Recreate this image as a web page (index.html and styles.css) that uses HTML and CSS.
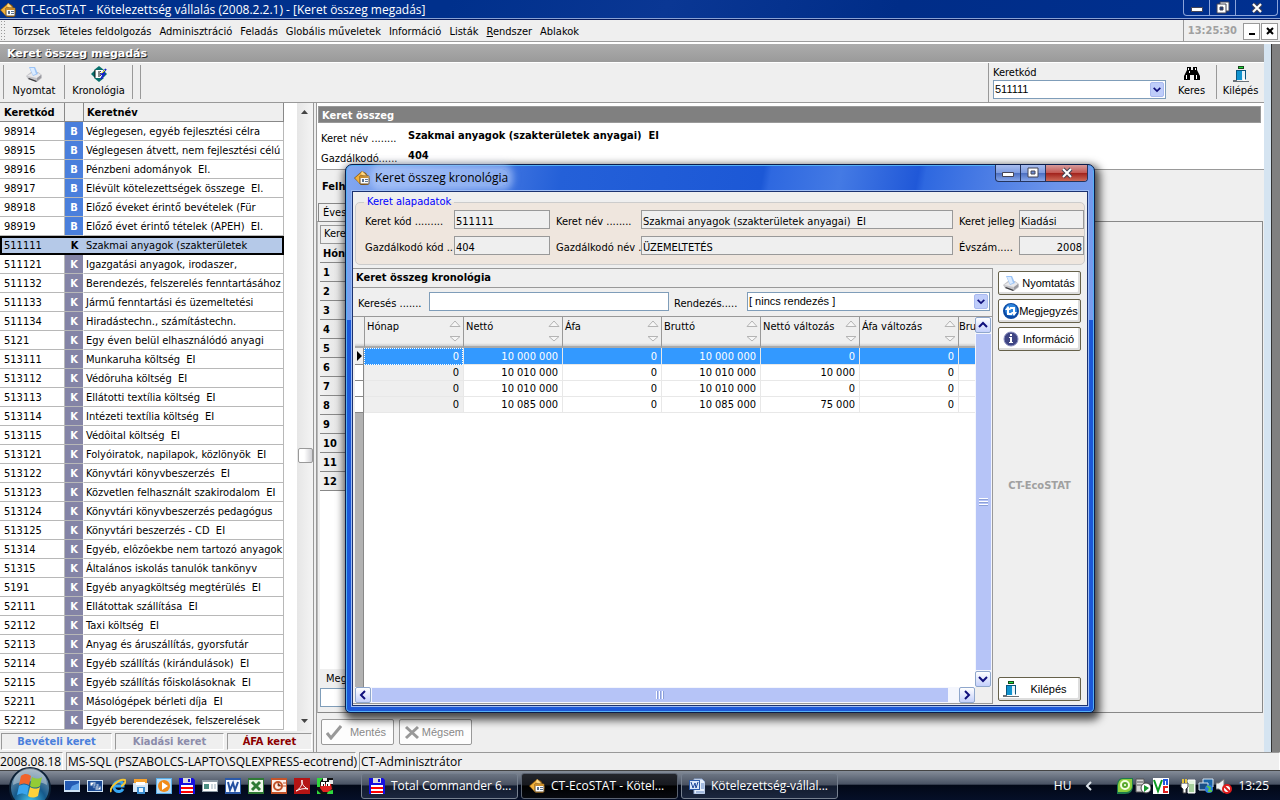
FILE: index.html
```html
<!DOCTYPE html>
<html lang="hu">
<head>
<meta charset="utf-8">
<title>CT-EcoSTAT</title>
<link rel="stylesheet" href="styles.css">
</head>
<body>
<svg class="defs" aria-hidden="true">
  <symbol id="house" viewBox="0 0 16 16"><path d="M0 8 8 1l4 2 4 6-2 6H7z" fill="#8a5a10"/><path d="M1 8 8 2l3 2v9l-5 1z" fill="#f1b13c"/><path d="M8 1l7 7-1 1-7-5z" fill="#ffd884"/><path d="M6 6h9v8H6z" fill="#fff" stroke="#6b4a1c"/><path d="M6 6h9v2H6z" fill="#c98c2a"/><path d="M8 9h2v3H8zM11 9h3v1h-3zM11 11h3v1h-3z" fill="#5a7290"/></symbol>
  <symbol id="printer" viewBox="0 0 16 16"><path d="M0 10l5-4h7l4 3v3l-5 4-9-3z" fill="#c4c4c8"/><path d="M1 10l5-3h6l3 2-4 3z" fill="#e9e9ec"/><path d="M3 1h6l3 7-5 2z" fill="#9cc4f6"/><path d="M4 2h4l2 6-3 1z" fill="#dcecff"/><path d="M2 13l8 3 1-1-8-3z" fill="#3c3c40"/><path d="M11 12l4-3v3l-4 3z" fill="#9a9aa0"/></symbol>
  <symbol id="chrono" viewBox="0 0 16 16"><path d="M8 0l5 4H3zM8 16l-5-4h10z" fill="#08706c"/><path d="M4 4v8L0 8z" fill="#08706c"/><path d="M12 4v8l4-4z" fill="#08706c"/><path d="M4 4h8v8H4z" fill="#fff"/><path d="M4 4v8M8 5v6" stroke="#111"/><path d="M9 5h1v1H9zM9 7h1v1H9zM9 9h1v1H9z" fill="#444"/><path d="M15 3l-4 5h2l-3 5" fill="none" stroke="#1822c8" stroke-width="2"/><path d="M14 4l-3 3" stroke="#ff0"/></symbol>
  <symbol id="bino" viewBox="0 0 16 16"><path d="M3 1h4v3h2V1h4v3l3 6v4h-6V9H6v5H0v-4l3-6z" fill="#000"/><path d="M4 2h1v2H4zM11 2h1v2h-1zM2 9h1v4H2zM12 9h1v4h-1zM5 5h1v2H5z" fill="#fff"/></symbol>
  <symbol id="door" viewBox="0 0 16 16"><path d="M5 0h6v3H5z" fill="#174a1c"/><path d="M6 1h4v1H6z" fill="#1fe03c"/><path d="M3 4h10v10H3z" fill="#0a557e"/><path d="M4 5h5v9H4z" fill="#1093cf"/><path d="M9 5h3v8l-3 2z" fill="#e6f4fc"/><path d="M0 14h4v1h12v1H0z" fill="#687078"/><path d="M10 11l4 4h-4z" fill="#fff"/></symbol>
  <symbol id="down" viewBox="0 0 12 12"><path d="M2 4l4 4 4-4" fill="none" stroke="#10107c" stroke-width="2"/></symbol>
  <symbol id="sort" viewBox="0 0 12 22"><path d="M1 6.500h10L6 1z" fill="#f6f6f6" stroke="#b4b4b4"/><path d="M1 16.500h10L6 21z" fill="#f6f6f6" stroke="#b4b4b4"/></symbol>
  <symbol id="floppy" viewBox="0 0 16 16"><path d="M0 0h14l2 2v14H0z" fill="#1410e0"/><path d="M4 0h8v5H4z" fill="#dcdcdc"/><path d="M9 1h2v3H9z" fill="#1410e0"/><path d="M2 7h12v9H2z" fill="#fff"/><path d="M2 9h12v2H2zM2 13h12v2H2z" fill="#f00"/></symbol>
  <symbol id="word" viewBox="0 0 16 16"><path d="M0 0h16v16H0z" fill="#2b59a8"/><path d="M1 2h14v12H1z" fill="#f4f8ff"/><path d="M3 4l2 8 3-7 2 7 3-8" fill="none" stroke="#2450a0" stroke-width="2"/></symbol>
  <symbol id="worddoc" viewBox="0 0 16 16"><path d="M5 1h8l3 3v12H5z" fill="#e8f0fc" stroke="#8fa9d4"/><path d="M12 6h3M12 8h3M12 10h3M7 14h8" stroke="#5f83c0"/><path d="M0 2h11v10H0z" fill="#2b59a8"/><path d="M1 3h9v8H1z" fill="#dbe7fa"/><path d="M2 4l2 6 2-5 1 5 2-6" fill="none" stroke="#1d479a" stroke-width="1"/></symbol>
</svg>

<header class="titlebar">
  <svg class="i16"><use href="#house"/></svg>
  <h1>CT-EcoSTAT - Kötelezettség vállalás (2008.2.2.1) - [Keret összeg megadás]</h1>
  <div class="winbtns">
    <button aria-label="Kis méret"><svg viewBox="0 0 14 14"><path d="M1.500 6.500h11v4h-11z" fill="#fff" stroke="#445"/></svg></button>
    <button aria-label="Előző méret"><svg viewBox="0 0 14 14"><path d="M4 1h9v9H4z" fill="#fff" stroke="#445"/><path d="M1 3h9v9H1z" fill="#fff" stroke="#445"/><path d="M4 6h3v3H4z" fill="#1c3a82" stroke="#445"/></svg></button>
    <button class="wide" aria-label="Bezárás"><svg viewBox="0 0 14 14"><path d="M3 3l8 8M11 3l-8 8" stroke="#445" stroke-width="4"/><path d="M3 3l8 8M11 3l-8 8" stroke="#fff" stroke-width="2"/></svg></button>
  </div>
</header>

<nav class="menubar">
  <span class="grip"></span>
  <button>Törzsek</button><button>Tételes feldolgozás</button><button>Adminisztráció</button><button>Feladás</button><button>Globális műveletek</button><button>Információ</button><button>Listák</button><button><u>R</u>endszer</button><button>Ablakok</button>
  <time class="clock">13:25:30</time>
  <div class="mdibtns">
    <button aria-label="Kicsinyítés"><svg viewBox="0 0 10 10"><path d="M2 8h6" stroke="#000" stroke-width="2"/></svg></button>
    <button aria-label="Ablak bezárása"><svg viewBox="0 0 10 10"><path d="M2 2l6 6M8 2l-6 6" stroke="#000" stroke-width="2"/></svg></button>
  </div>
</nav>

<main class="mdi">
  <section class="form">
    <h2 class="banner">Keret összeg megadás</h2>
    <div class="toolbar">
      <button class="tool tool-print"><svg class="i16"><use href="#printer"/></svg>Nyomtat</button>
      <button class="tool tool-chrono"><svg class="i16"><use href="#chrono"/></svg>Kronológia</button>
      <span class="tool-end"></span>
      <div class="codebox">
        <label for="code">Keretkód</label>
        <span class="combo"><select id="code"><option>511111</option></select><svg><use href="#down"/></svg></span>
      </div>
      <button class="tool tool-find"><svg class="i16"><use href="#bino"/></svg>Keres</button>
      <button class="tool tool-exit"><svg class="i16"><use href="#door"/></svg>Kilépés</button>
    </div>

    <div class="split">
      <div class="left">
        <div class="listwrap">
          <table class="list">
            <colgroup><col class="c-code"><col class="c-type"><col></colgroup>
            <thead><tr><th>Keretkód</th><th></th><th>Keretnév</th></tr></thead>
            <tbody>
              <tr class="b"><td>98914</td><td>B</td><td>Véglegesen, egyéb fejlesztési célra</td></tr>
              <tr class="b"><td>98915</td><td>B</td><td>Véglegesen átvett, nem fejlesztési célú</td></tr>
              <tr class="b"><td>98916</td><td>B</td><td>Pénzbeni adományok&nbsp; EI.</td></tr>
              <tr class="b"><td>98917</td><td>B</td><td>Elévült kötelezettségek összege&nbsp; EI.</td></tr>
              <tr class="b"><td>98918</td><td>B</td><td>Előző éveket érintő bevételek (Für</td></tr>
              <tr class="b"><td>98919</td><td>B</td><td>Előző évet érintő tételek (APEH)&nbsp; EI.</td></tr>
              <tr class="sel"><td>511111</td><td>K</td><td>Szakmai anyagok (szakterületek</td></tr>
              <tr><td>511121</td><td>K</td><td>Igazgatási anyagok, irodaszer,</td></tr>
              <tr><td>511132</td><td>K</td><td>Berendezés, felszerelés fenntartásához</td></tr>
              <tr><td>511133</td><td>K</td><td>Jármű fenntartási és üzemeltetési</td></tr>
              <tr><td>511134</td><td>K</td><td>Hiradástechn., számítástechn.</td></tr>
              <tr><td>5121</td><td>K</td><td>Egy éven belül elhasználódó anyagi</td></tr>
              <tr><td>513111</td><td>K</td><td>Munkaruha költség&nbsp; EI</td></tr>
              <tr><td>513112</td><td>K</td><td>Védôruha költség&nbsp; EI</td></tr>
              <tr><td>513113</td><td>K</td><td>Ellátotti textília költség&nbsp; EI</td></tr>
              <tr><td>513114</td><td>K</td><td>Intézeti textília költség&nbsp; EI</td></tr>
              <tr><td>513115</td><td>K</td><td>Védôital költség&nbsp; EI</td></tr>
              <tr><td>513121</td><td>K</td><td>Folyóiratok, napilapok, közlönyök&nbsp; EI</td></tr>
              <tr><td>513122</td><td>K</td><td>Könyvtári könyvbeszerzés&nbsp; EI</td></tr>
              <tr><td>513123</td><td>K</td><td>Közvetlen felhasznált szakirodalom&nbsp; EI</td></tr>
              <tr><td>513124</td><td>K</td><td>Könyvtári könyvbeszerzés pedagógus</td></tr>
              <tr><td>513125</td><td>K</td><td>Könyvtári beszerzés - CD&nbsp; EI</td></tr>
              <tr><td>51314</td><td>K</td><td>Egyéb, elôzôekbe nem tartozó anyagok</td></tr>
              <tr><td>51315</td><td>K</td><td>Általános iskolás tanulók tankönyv</td></tr>
              <tr><td>5191</td><td>K</td><td>Egyéb anyagköltség megtérülés&nbsp; EI</td></tr>
              <tr><td>52111</td><td>K</td><td>Ellátottak szállítása&nbsp; EI</td></tr>
              <tr><td>52112</td><td>K</td><td>Taxi költség&nbsp; EI</td></tr>
              <tr><td>52113</td><td>K</td><td>Anyag és áruszállítás, gyorsfutár</td></tr>
              <tr><td>52114</td><td>K</td><td>Egyéb szállítás (kirándulások)&nbsp; EI</td></tr>
              <tr><td>52115</td><td>K</td><td>Egyéb szállítás főiskolásoknak&nbsp; EI</td></tr>
              <tr><td>52211</td><td>K</td><td>Másológépek bérleti díja&nbsp; EI</td></tr>
              <tr><td>52212</td><td>K</td><td>Egyéb berendezések, felszerelések</td></tr>
            </tbody>
          </table>
          <div class="vista-scroll">
            <svg viewBox="0 0 8 5"><path d="M0 4h7L3.500 0z" fill="#444"/></svg>
            <span class="vista-thumb"></span>
            <svg viewBox="0 0 8 5"><path d="M0 0h7L3.500 4z" fill="#444"/></svg>
          </div>
        </div>
        <div class="legend"><span class="l-in">Bevételi keret</span><span class="l-out">Kiadási keret</span><span class="l-vat">ÁFA keret</span></div>
      </div>

      <div class="right">
        <div class="summary">
          <h3>Keret összeg</h3>
          <dl><dt>Keret név ........</dt><dd>Szakmai anyagok (szakterületek anyagai)&nbsp; EI</dd><dt>Gazdálkodó......</dt><dd>404</dd></dl>
        </div>
        <div class="usage">Felh</div>
        <button class="tab">Éves</button>
        <div class="page">
          <div class="sub">Kere</div>
          <table class="months">
            <thead><tr><th>Hón</th></tr></thead>
            <tbody><tr><td>1</td></tr><tr><td>2</td></tr><tr><td>3</td></tr><tr><td>4</td></tr><tr><td>5</td></tr><tr><td>6</td></tr><tr><td>7</td></tr><tr><td>8</td></tr><tr><td>9</td></tr><tr><td>10</td></tr><tr><td>11</td></tr><tr><td>12</td></tr></tbody>
          </table>
          <div class="blank"></div>
          <label class="notelabel" for="note">Meg</label>
          <input class="note" id="note" type="text">
        </div>
        <div class="actions">
          <button disabled><svg class="i16" viewBox="0 0 16 16"><path d="M1 9l4 5L15 2" fill="none" stroke="#999" stroke-width="3"/></svg><span>Mentés</span></button>
          <button disabled><svg class="i16" viewBox="0 0 16 16"><path d="M2 3l12 11M14 3L2 14" stroke="#999" stroke-width="3"/></svg><span>Mégsem</span></button>
        </div>
      </div>
    </div>
  </section>
  <div class="edge"></div>
  <div class="desk"></div>
</main>

<footer class="status"><span class="s-date">2008.08.18</span><span class="s-db">MS-SQL (PSZABOLCS-LAPTO\SQLEXPRESS-ecotrend)</span><span class="s-user">CT-Adminisztrátor</span></footer>

<div class="taskbar">
  <button class="start" aria-label="Start"><svg viewBox="0 0 44 44">
    <defs><radialGradient id="orb" cx="50%" cy="85%" r="80%"><stop offset="0" stop-color="#43c5ee"/><stop offset=".5" stop-color="#155a8c"/><stop offset="1" stop-color="#7c94a8"/></radialGradient></defs>
    <circle cx="22" cy="22" r="20" fill="url(#orb)" stroke="#0c2136" stroke-width="2"/>
    <path d="M5 19a17 17 0 0 1 34 0c-9-5-24-5-34 0z" fill="#fff" opacity=".35"/>
    <path d="M13 10c4-3 7-2 10 0l-2 9c-4-2-7-2-10 0z" fill="#f0642c"/><path d="M24 11c4 2 7 2 10 0l-2 9c-3 2-7 2-10 0z" fill="#93cc35"/><path d="M11 20c4-2 7-2 10 0l-2 9c-4-2-7-2-10 0z" fill="#3aa5ee"/><path d="M22 21c4 2 7 2 10 0l-2 9c-4 2-7 2-10 0z" fill="#ffd23a"/></svg></button>
  <div class="quick">
    <svg viewBox="0 0 16 16"><path d="M0 2h16v12H0z" fill="#cfe2f4"/><path d="M1 3h14v9H1z" fill="#245bb4"/><path d="M8 8l7-3v7H6z" fill="#5fa0e6"/></svg>
    <svg viewBox="0 0 16 16"><path d="M0 2h16v12H0z" fill="#cfe2f4"/><path d="M1 3h14v10H1z" fill="#1c4a94"/><path d="M3 4h6v4H3zM6 6h6v4H6zM8 8h6v4H8z" fill="#fff" stroke="#2a5aa0"/></svg>
    <svg viewBox="0 0 16 16"><path d="M13 11a5 5 0 1 1 0-5v2H4" fill="none" stroke="#36a6f2" stroke-width="3"/><path d="M1 14C-1 10 9 0 15 2c2 2-3 6-4 6" fill="none" stroke="#f5c532" stroke-width="2"/></svg>
    <svg viewBox="0 0 16 16"><path d="M1 1h13v5H1z" fill="#f5a02c"/><path d="M0 5h15v9H0z" fill="#d6e6f5"/><path d="M3 4h9v3H3z" fill="#fff"/><path d="M4 9h8v7H4z" fill="#3d8fd2"/><path d="M6 10h4v4H6z" fill="#e9f6ff"/></svg>
    <svg viewBox="0 0 16 16"><path d="M0 0h16v16H0z" fill="#5aaee8"/><path d="M1 1h14v14H1z" fill="#b7dcf7"/><circle cx="8" cy="8" r="6" fill="#f18b18"/><path d="M6 4l6 4-6 4z" fill="#fff"/></svg>
    <svg><use href="#floppy"/></svg>
    <svg viewBox="0 0 16 16"><path d="M0 2h16v12H0z" fill="#8e9ba6"/><path d="M1 4h14v9H1z" fill="#fff"/><path d="M2 6h5v5H2z" fill="#4a8f83"/><path d="M9 6h2v5H9zM12 6h2v5h-2z" fill="#ccd6dc"/></svg>
    <svg><use href="#word"/></svg>
    <svg viewBox="0 0 16 16"><path d="M0 0h16v16H0z" fill="#2f7a35"/><path d="M1 2h14v12H1z" fill="#eff8ea"/><path d="M4 4l8 8M12 4l-8 8" stroke="#2f7a35" stroke-width="3"/></svg>
    <svg viewBox="0 0 16 16"><path d="M0 0h16v16H0z" fill="#c3532a"/><path d="M1 2h14v12H1z" fill="#fff0e8"/><circle cx="7" cy="8" r="4" fill="none" stroke="#c3532a" stroke-width="2"/><path d="M7 5v3h3M12 5h3M12 8h3" stroke="#c3532a"/></svg>
    <svg viewBox="0 0 16 16"><path d="M0 0h16v16H0z" fill="#b41414"/><path d="M2 13C6 11 9 6 8 2c-1 2 1 7 6 9-4-1-8 0-12 2z" fill="none" stroke="#fff"/></svg>
    <svg viewBox="0 0 16 16"><path d="M0 0h16v16H0z" fill="#111"/><path d="M0 0h6L3 4v5H0zM0 12l4 4H0zM11 13l5-1v4h-6z" fill="#2fd83c"/><path d="M6 0h4v3H6zM12 2h4v4h-4z" fill="#e8e8e8"/><path d="M4 6h10l1 5-4 3H6l-3-4z" fill="#e02222"/><path d="M4 4h4v4H4zM9 4h4v4H9z" fill="#fff"/><path d="M6 6h1v2H6zM10 6h1v2h-1z" fill="#111"/></svg>
  </div>
  <div class="tasks">
    <button><svg class="i16"><use href="#floppy"/></svg>Total Commander 6...</button>
    <button class="active"><svg class="i16"><use href="#house"/></svg>CT-EcoSTAT - Kötel...</button>
    <button><svg class="i16"><use href="#worddoc"/></svg>Kötelezettség-vállal...</button>
  </div>
  <div class="tray">
    <span class="lang">HU</span>
    <svg class="chev" viewBox="0 0 8 10"><path d="M6 1L2 5l4 4" fill="none" stroke="#dde3ea" stroke-width="2"/></svg>
    <svg viewBox="0 0 16 16"><path d="M6 0h10v8c0 5-3 8-8 8H0V8c0-5 2-8 6-8z" fill="#1d7a4c"/><path d="M6 1h9v7c0 4-3 6-7 6H1V8c0-4 2-7 5-7z" fill="#8fcf3e"/><circle cx="8" cy="7" r="4" fill="#58a82c" stroke="#f3ffe0" stroke-width="2"/><circle cx="8" cy="7" r="1" fill="#fff"/></svg>
    <svg viewBox="0 0 16 16"><path d="M1 1h8v13H1z" fill="#d5d5d5" stroke="#555"/><path d="M2 4h6M2 7h6" stroke="#555"/><circle cx="11" cy="10" r="5" fill="#fff" stroke="#444"/><path d="M9 7l5 3-5 4z" fill="#16962c"/></svg>
    <svg viewBox="0 0 16 16"><path d="M0 0h16v16H0z" fill="#fff"/><path d="M1 2l4 11L9 2" fill="none" stroke="#0a9a20" stroke-width="2"/><path d="M11 7V2h3v5" fill="none" stroke="#2158e0" stroke-width="2"/><path d="M15 9h-4v5h4" fill="none" stroke="#e02020" stroke-width="2"/></svg>
    <svg class="gap" viewBox="0 0 16 16"><path d="M8 2h7v13H8z" fill="#e4f4e0" stroke="#fff"/><path d="M9 6h5v8H9z" fill="#a6cf9c"/><path d="M1 5h7v4L6 11v4H3v-4L1 9z" fill="#fff" stroke="#444"/><path d="M3 1v4M6 1v4" stroke="#e5c43c" stroke-width="2"/></svg>
    <svg viewBox="0 0 16 16"><path d="M5 1h10v8H5z" fill="#1a65a8" stroke="#d4e4f2"/><path d="M1 5h9v7H1z" fill="#1b4e84" stroke="#d4e4f2"/><circle cx="11" cy="11" r="4" fill="#2a7ce0"/><path d="M9 8l3 2-1 3 3 0" fill="none" stroke="#57c452" stroke-width="2"/></svg>
    <svg viewBox="0 0 16 16"><path d="M0 5h3l5-4v14l-5-4H0z" fill="#eef2f5" stroke="#777"/><circle cx="11" cy="11" r="4" fill="#fff" stroke="#e01c1c" stroke-width="2"/><path d="M8 8l6 6" stroke="#e01c1c" stroke-width="2"/></svg>
    <time>13:25</time>
  </div>
</div>

<div class="dialog" role="dialog" aria-labelledby="dlgtitle">
  <div class="dlg-title">
    <svg class="i16"><use href="#house"/></svg>
    <h2 id="dlgtitle"><span>Keret összeg kronológia</span></h2>
    <div class="winbtns light">
      <button aria-label="Kis méret"><svg viewBox="0 0 14 14"><path d="M1.500 6.500h11v4h-11z" fill="#fff" stroke="#445"/></svg></button>
      <button aria-label="Teljes méret"><svg viewBox="0 0 14 14"><path d="M2 2h10v9H2z" fill="#fff" stroke="#445"/><path d="M5 5h4v3H5z" fill="#6d8cd4" stroke="#445"/></svg></button>
      <button class="wide red" aria-label="Bezárás"><svg viewBox="0 0 14 14"><path d="M3 3l8 8M11 3l-8 8" stroke="#445" stroke-width="4"/><path d="M3 3l8 8M11 3l-8 8" stroke="#fff" stroke-width="2"/></svg></button>
    </div>
  </div>
  <div class="dlg-body">
    <fieldset class="base">
      <legend>Keret alapadatok</legend>
      <div class="fields">
        <label for="f1">Keret kód .........</label><input id="f1" readonly value="511111">
        <label class="ind" for="f2">Keret név ........</label><input id="f2" readonly value="Szakmai anyagok (szakterületek anyagai)&nbsp; EI">
        <label class="ind" for="f3">Keret jelleg</label><input id="f3" readonly value="Kiadási">
        <label for="f4">Gazdálkodó kód ..</label><input id="f4" readonly value="404">
        <label class="ind" for="f5">Gazdálkodó név .</label><input id="f5" readonly value="ÜZEMELTETÉS">
        <label class="ind" for="f6">Évszám.....</label><input id="f6" class="num" readonly value="2008">
      </div>
    </fieldset>
    <div class="dlg-main">
      <div class="panel">
        <h3>Keret összeg kronológia</h3>
        <div class="search">
          <label for="q">Keresés .......</label><input id="q" type="text">
          <label class="ord" for="o">Rendezés.....</label>
          <span class="combo"><select id="o"><option>[ nincs rendezés ]</option></select><svg><use href="#down"/></svg></span>
        </div>
        <div class="gridbox">
          <div class="gridview">
            <table class="grid">
              <colgroup><col class="g-ind"><col class="g-col"><col class="g-col"><col class="g-col"><col class="g-col"><col class="g-col"><col class="g-col"><col></colgroup>
              <thead><tr><th></th>
                <th><div>Hónap<svg><use href="#sort"/></svg></div></th><th><div>Nettó<svg><use href="#sort"/></svg></div></th><th><div>Áfa<svg><use href="#sort"/></svg></div></th><th><div>Bruttó<svg><use href="#sort"/></svg></div></th><th><div>Nettó változás<svg><use href="#sort"/></svg></div></th><th><div>Áfa változás<svg><use href="#sort"/></svg></div></th><th>Bru</th></tr></thead>
              <tbody>
                <tr class="cur"><td><svg viewBox="0 0 6 10"><path d="M0 0l5 5-5 5z"/></svg></td><td>0</td><td>10 000 000</td><td>0</td><td>10 000 000</td><td>0</td><td>0</td><td></td></tr>
                <tr><td></td><td>0</td><td>10 010 000</td><td>0</td><td>10 010 000</td><td>10 000</td><td>0</td><td></td></tr>
                <tr><td></td><td>0</td><td>10 010 000</td><td>0</td><td>10 010 000</td><td>0</td><td>0</td><td></td></tr>
                <tr><td></td><td>0</td><td>10 085 000</td><td>0</td><td>10 085 000</td><td>75 000</td><td>0</td><td></td></tr>
              </tbody>
            </table>
            <div class="rail"></div>
          </div>
          <div class="vs"><button class="up" aria-label="Fel"><svg><use href="#down"/></svg></button><span class="thumb"><i></i></span><button aria-label="Le"><svg><use href="#down"/></svg></button></div>
          <div class="hs"><button class="lt" aria-label="Balra"><svg><use href="#down"/></svg></button><span class="thumb"><i></i></span><button class="rt" aria-label="Jobbra"><svg><use href="#down"/></svg></button></div>
        </div>
      </div>
      <div class="side">
        <button><svg class="i16"><use href="#printer"/></svg><span>Nyomtatás</span></button>
        <button><svg class="i16" viewBox="0 0 16 16"><circle cx="8" cy="8" r="8" fill="#0c4aa4"/><circle cx="8" cy="7" r="6" fill="#2f86de"/><path d="M5 3l3 4H6v3h3v2H4V7H2zM11 13l-3-4h2V6H7V4h5v5h2z" fill="#fff"/></svg><span>Megjegyzés</span></button>
        <button><svg class="i16" viewBox="0 0 16 16"><circle cx="8" cy="8" r="7" fill="#3f4584" stroke="#8a8fc0"/><path d="M7 3h2v2H7zM6 6h3v5h1v1H6v-1h1V7H6z" fill="#fff"/></svg><span>Információ</span></button>
        <strong>CT-EcoSTAT</strong>
        <button><svg class="i16"><use href="#door"/></svg><span>Kilépés</span></button>
      </div>
    </div>
  </div>
</div>
</body>
</html>
```
FILE: styles.css
```css
* { box-sizing: border-box; }
body { margin: 0; height: 100vh; display: flex; flex-direction: column; position: relative; overflow: hidden; background: #efefef; color: #000; font: 11px/14px "DejaVu Sans Condensed", "DejaVu Sans", sans-serif; }
button, input, select { font: inherit; color: inherit; margin: 0; padding: 0; border: 0; border-radius: 0; background: none; }
h1, h2, h3, dl, dd { margin: 0; }
table { border-collapse: separate; border-spacing: 0; table-layout: fixed; }
th, td { padding: 0; text-align: left; white-space: nowrap; overflow: hidden; }
.defs { display: none; }
.i16 { width: 16px; height: 16px; flex: none; }

.titlebar { height: 20px; flex: none; display: flex; align-items: center; gap: 5px; background: linear-gradient(115deg, #00308c 0 35%, #0a3794 52%, #002d88 70%, #003090); border-bottom: 1px solid #07195a; box-shadow: inset 0 -1px #8aa2d4; color: #fff; }
.titlebar h1 { flex: 1; font: 12px/18px "Open Sans", sans-serif; }
.winbtns { display: flex; align-self: flex-start; height: 16px; margin-right: 2px; border: 1px solid #8ba4da; border-top: 0; border-radius: 0 0 4px 4px; overflow: hidden; }
.winbtns button { width: 26px; height: 15px; display: grid; place-items: center; border-right: 1px solid #8ba4da; }
.winbtns .wide { width: 41px; border-right: 0; }
.winbtns svg { width: 14px; height: 14px; }

.menubar { height: 24px; flex: none; display: flex; align-items: center; border-bottom: 2px solid #fff; box-shadow: inset 0 -1px #9c9c9c; }
.menubar > button { padding: 2px 4px 0; }
.grip { width: 5px; height: 22px; margin-right: 4px; background: radial-gradient(#999 1px, transparent 1px) 0 0 / 3px 3px; }
.clock { margin-left: auto; height: 22px; padding: 0 6px 0 4px; border-left: 1px solid #999; line-height: 21px; font-weight: bold; color: #a0a0a0; }
.mdibtns { display: flex; gap: 1px; margin-right: 2px; }
.mdibtns button { width: 17px; height: 17px; border: 1px solid #999; background: #fff; display: grid; place-items: center; }
.mdibtns svg { width: 10px; height: 10px; }

.mdi { flex: 1; min-height: 0; display: flex; }
.form { flex: 1; min-width: 0; display: flex; flex-direction: column; }
.edge { width: 7px; background: #d5e4f1; }
.desk { width: 9px; background: #808080; border-left: 1px solid #333; }
.banner { height: 19px; flex: none; padding-left: 7px; background: linear-gradient(#acacac, #9a9a9a); border-bottom: 1px solid #fff; color: #fff; font: bold 11px/19px "DejaVu Sans", sans-serif; text-shadow: 1px 1px #222; }
.toolbar { height: 40px; flex: none; display: flex; padding-left: 3px; border-bottom: 1px solid #999; }
.tool { display: flex; flex-direction: column; align-items: center; height: 34px; margin-top: 2px; padding-top: 1px; gap: 2px; }
.tool-print, .tool-chrono { border-left: 1px solid #999; }
.tool-print { width: 61px; }
.tool-chrono { width: 69px; border-right: 1px solid #999; }
.tool-end { width: 8px; height: 34px; margin-top: 2px; border-right: 1px solid #999; }
.codebox { margin-left: auto; width: 179px; padding: 3px 0 0 4px; border-left: 1px solid #999; }
.codebox label { display: block; }
.combo { position: relative; display: block; height: 19px; border: 1px solid #7f9db9; background: #fff; }
.combo select { width: 100%; height: 17px; padding-left: 1px; appearance: none; font: 11px/15px "Liberation Sans", Arial, sans-serif; }
.combo svg { position: absolute; right: 1px; top: 1px; width: 14px; height: 15px; padding: 1px; background: #bfcdfa; border: 1px solid #a9b9ef; border-radius: 2px; pointer-events: none; }
.codebox .combo { width: 173px; }
.tool-find { width: 49px; }
.tool-exit { width: 48px; border-left: 1px solid #999; }

.split { flex: 1; min-height: 0; display: flex; }
.left { width: 314px; flex: none; display: flex; flex-direction: column; border-right: 1px solid #999; }
.listwrap { flex: 1; min-height: 0; overflow: hidden; display: flex; background: #fff; }
.list { width: 284px; margin-right: 13px; align-self: flex-start; }
.c-code { width: 65px; }
.c-type { width: 19px; }
.list th { height: 19px; padding: 2px 3px 0 4px; background: #efefef; border-right: 1px solid #888; border-bottom: 1px solid #888; }
.list td { height: 19px; padding: 2px 1px 0 4px; border-right: 1px solid #b8b8b8; border-bottom: 1px solid #b8b8b8; }
.list th:nth-child(3) { padding-left: 3px; }
.list td:nth-child(2) { padding: 2px 0 0; text-align: center; font-weight: bold; color: #fff; background: #8484a6; border-right-color: #fff; }
.list td:nth-child(3) { padding-left: 2px; }
.list .b td:nth-child(2) { background: #4a7fdc; }
.list .sel td { padding-top: 0; background: #b5c9e8; border: solid #000; border-width: 2px 0; }
.list .sel td:nth-child(2) { padding-top: 0; color: #000; background: #b5c9e8; }
.list .sel td:first-child { border-left-width: 2px; padding-left: 2px; }
.list .sel td:last-child { border-right-width: 2px; }
.vista-scroll { flex: 1; display: flex; flex-direction: column; justify-content: space-between; align-items: center; padding: 7px 0; background: linear-gradient(90deg, #e6e6e6, #f4f4f4); }
.vista-scroll svg { width: 8px; height: 5px; }
.vista-thumb { width: 15px; height: 15px; margin-top: 76px; border: 1px solid #999; border-radius: 2px; background: linear-gradient(90deg, #fff 40%, #d0d0d4); }
.legend { height: 21px; flex: none; display: grid; grid-template-columns: 111px 109px 1fr; gap: 3px; padding: 2px 1px; }
.legend span { border: 1px solid; border-color: #999 #fff #fff #999; text-align: center; font-weight: bold; line-height: 15px; }
.l-in { color: #4a7fdc; }
.l-out { color: #8c8caa; }
.l-vat { color: #8b0000; }

.right { flex: 1; min-width: 0; display: flex; flex-direction: column; margin-left: 2px; border-left: 1px solid #999; }
.summary { height: 67px; flex: none; padding: 3px 3px 0 1px; background: #fff; border-bottom: 1px solid #999; }
.summary h3 { height: 17px; padding-left: 3px; background: #808080; border: 1px solid #999; color: #fff; font: inherit; font-weight: bold; line-height: 17px; }
.summary dl { display: grid; grid-template-columns: 87px 1fr; grid-auto-rows: 20px; padding: 6px 0 0 3px; }
.summary dt { padding-top: 3px; }
.summary dd { font-weight: bold; }
.usage { height: 33px; flex: none; padding: 10px 5px 0; font-weight: bold; }
.tab { height: 18px; width: 60px; flex: none; margin-left: 1px; padding-left: 4px; text-align: left; border: 1px solid #888; border-bottom: 0; }
.page { flex: 1; min-height: 0; display: flex; flex-direction: column; margin-right: 1px; padding: 3px 2px 5px; border: 1px solid #888; border-left-color: #bbb; }
.page > * { width: 60%; }
.sub { height: 19px; flex: none; padding: 1px 3px; border: 1px solid #999; }
.months { flex: none; }
.months th, .months td { height: 19px; padding: 2px 0 0 3px; font-weight: bold; border-bottom: 1px solid #888; background: linear-gradient(90deg, #f2f2f2, #d8d8d8 40px); }
.blank { flex: 1; background: #fff; }
.notelabel { height: 19px; padding: 3px 6px 0; }
.note { height: 19px; flex: none; background: #fff; border: 1px solid #7f9db9; }
.actions { height: 39px; flex: none; display: flex; gap: 5px; padding: 6px 4px; }
.actions button { width: 73px; height: 26px; display: flex; align-items: center; justify-content: space-between; padding: 0 7px 0 4px; background: #fdfdfd; border: 1px solid #999; border-radius: 2px; color: #888; font-family: "Liberation Sans", Arial, sans-serif; }

.status { height: 18px; flex: none; display: grid; grid-template-columns: 63px 290px 1fr; gap: 3px; font: 12px/17px "Open Sans", sans-serif; }
.status span { padding-left: 1px; border: 1px solid; border-color: #999 #fff #fff #999; line-height: 17px; white-space: nowrap; }
.status span:first-child { padding: 0; border-left: 0; }

.taskbar { height: 30px; flex: none; display: flex; align-items: center; border-top: 1px solid #444; background: linear-gradient(#848c98, #4a5364 45%, #020817 50%, #050f28); color: #fff; font: 12px/16px "Open Sans", sans-serif; }
.start { width: 44px; height: 44px; margin: 0 12px 0 8px; align-self: flex-start; position: relative; top: -5px; }
.start svg { width: 44px; height: 44px; }
.quick { display: flex; gap: 7px; }
.quick svg { width: 16px; height: 16px; }
.tasks { display: flex; gap: 3px; margin-left: 28px; }
.tasks button { width: 157px; height: 26px; display: flex; align-items: center; gap: 6px; padding: 0 7px; border: 1px solid #76808f; border-radius: 3px; background: linear-gradient(#6c7583, #4a5262 45%, #121b2e 50%, #1b263e); white-space: nowrap; }
.tasks .active { background: linear-gradient(#24262c, #17191f 45%, #000 50%, #07090f); border-color: #5a6270; }
.tray { margin-left: auto; display: flex; align-items: center; gap: 2px; padding-right: 11px; }
.tray svg { width: 16px; height: 16px; }
.tray .chev { width: 8px; height: 10px; margin: 0 22px 0 12px; }
.tray .gap { margin-left: 9px; }
.tray time { margin-left: 4px; }

.dialog { position: absolute; left: 345px; right: 185px; top: 164px; bottom: 87px; display: flex; flex-direction: column; padding: 0 6px 6px; border: 1px solid #0b1d4c; border-radius: 7px 7px 5px 5px; background: linear-gradient(100deg, #84a8f0 0, #5c8ae8 12%, #2460d8 28%, #1c58d6 54%, #2e68e0 55%, #447ae4 64%, #2058d8 74%, #2e68e0 75%, #6c94ea 92%, #7a9cec) 0 0 / 100% 155px no-repeat, #1c58d8; box-shadow: inset 0 0 0 1px #55b0f4, 2px 4px 9px 3px rgba(0,0,0,.7); }
.dlg-title { height: 26px; flex: none; display: flex; align-items: center; gap: 5px; padding-left: 2px; }
.dlg-title h2 { flex: 1; font: 12px/18px "Open Sans", sans-serif; }
.dlg-title h2 span { background: rgba(190,212,252,.6); box-shadow: 0 0 7px 5px rgba(190,212,252,.6); border-radius: 6px; line-height: 12px; }
.light { margin-right: 0; height: 17px; border-color: #24345e; background: linear-gradient(#a9bdee, #7d9be0 50%, #4a6dc0 50%, #86a6ea); }
.light button { height: 16px; width: 25px; border-color: #24345e; }
.light .red { background: linear-gradient(#d69a9c, #c25650 50%, #a0201a 50%, #cc6a58); }
.dlg-body { flex: 1; min-height: 0; display: flex; flex-direction: column; padding: 3px 0 1px; background: #efefef; border: 1px solid #1b3270; box-shadow: 0 0 0 1px #9dbcf4; }
.base { margin: 0 2px; padding: 0; border: 1px solid #ccc; border-radius: 5px; background: #efe6de; min-width: 0; }
.base legend { margin-left: 8px; padding: 0 3px; color: #00f; line-height: 14px; }
.fields { display: grid; grid-template-columns: 89px 96px 91px 1fr 66px 65px; gap: 7px 0; align-items: center; padding: 1px 0 9px 9px; }
.fields label { padding-top: 5px; white-space: nowrap; }
.fields .ind { padding-left: 6px; }
.fields input { width: 100%; min-width: 0; height: 19px; padding: 4px 1px 0; background: #efefef; border: 1px solid #999; }
.fields .num { text-align: right; }
.dlg-main { flex: 1; min-height: 0; display: flex; margin-top: 3px; }
.panel { flex: 1; min-width: 0; display: flex; flex-direction: column; border: 1px solid #999; border-left: 0; }
.panel h3 { height: 19px; flex: none; padding-left: 3px; border-bottom: 1px solid #999; font: bold 11px/18px "DejaVu Sans Condensed", sans-serif; }
.search { height: 29px; flex: none; display: flex; align-items: center; padding: 0 2px 1px 5px; border-bottom: 1px solid #999; }
.search label { width: 71px; padding-top: 5px; }
.search input { width: 240px; height: 19px; background: #fff; border: 1px solid #7f9db9; }
.search .ord { width: 78px; padding-left: 5px; }
.search .combo { flex: 1; }
.gridbox { flex: 1; min-height: 0; display: grid; grid-template: 1fr 16px / 1fr 17px; padding-left: 2px; }
.gridview { min-width: 0; min-height: 0; overflow: hidden; display: flex; flex-direction: column; background: #fff; }
.grid { width: 100%; flex: none; }
.g-ind { width: 9px; }
.g-col { width: 99px; }
.grid th { height: 31px; padding: 3px 0 0 2px; vertical-align: top; font-weight: normal; background: linear-gradient(#efefef 90%, #ccc); border-bottom: 2px solid #aaa; border-left: 1px solid #999; }
.grid th:first-child { border-left: 0; }
.grid th:last-child { padding-left: 0; }
.grid th div { display: flex; justify-content: space-between; padding-right: 2px; }
.grid th svg { width: 12px; height: 22px; }
.grid td { height: 16px; padding: 1px 4px 0 0; line-height: 14px; text-align: right; border-left: 1px solid #e8e8e8; border-bottom: 1px solid #e8e8e8; }
.grid td:first-child { padding: 0; background: #fff; border: 1px solid #888; border-width: 0 1px 1px 0; }
.grid td:first-child svg { display: block; width: 6px; height: 10px; margin-left: 2px; }
.grid td:nth-child(2) { background: #efefef; }
.grid .cur td { height: 17px; color: #fff; background: #3399ff; }
.grid .cur td:first-child { background: #efefef; }
.grid .cur td:nth-child(2) { border: 1px dotted #fff; padding: 0 3px 0 0; }
.rail { flex: 1; width: 9px; background: #b2b2b2; border-right: 1px solid #888; }
.vs, .hs { display: flex; background: #f4f6fd; }
.vs { flex-direction: column; }
.vs button, .hs button { width: 16px; height: 16px; flex: none; display: grid; place-items: center; border: 1px solid #8fa7cc; border-radius: 2px; background: linear-gradient(#fff, #c4d0fb); }
.vs svg, .hs svg { width: 12px; height: 12px; }
.up svg { transform: rotate(180deg); }
.lt svg { transform: rotate(90deg); }
.rt svg { transform: rotate(-90deg); }
.thumb { flex: 1; display: grid; place-items: center; margin: 1px; background: #b6c4f7; }
.hs .thumb { margin-right: 11px; }
.thumb i { width: 9px; height: 8px; background: repeating-linear-gradient(90deg, #fff 0 1px, #8ca0d8 1px 2px, transparent 2px 3px); }
.vs .thumb i { height: 9px; background: repeating-linear-gradient(#fff 0 1px, #8ca0d8 1px 2px, transparent 2px 3px); }
.side { width: 94px; flex: none; display: flex; flex-direction: column; gap: 4px; padding: 3px 6px 3px 5px; }
.side button { height: 24px; flex: none; display: flex; align-items: center; padding: 0 2px 0 4px; background: #fff; border: 1px solid #66614a; border-radius: 2px; box-shadow: inset -2px -2px #ddd; font-family: "Liberation Sans", Arial, sans-serif; }
.side button span { flex: 1; text-align: center; }
.side strong { margin: auto; padding-bottom: 56px; color: #a0a0a0; }
```
